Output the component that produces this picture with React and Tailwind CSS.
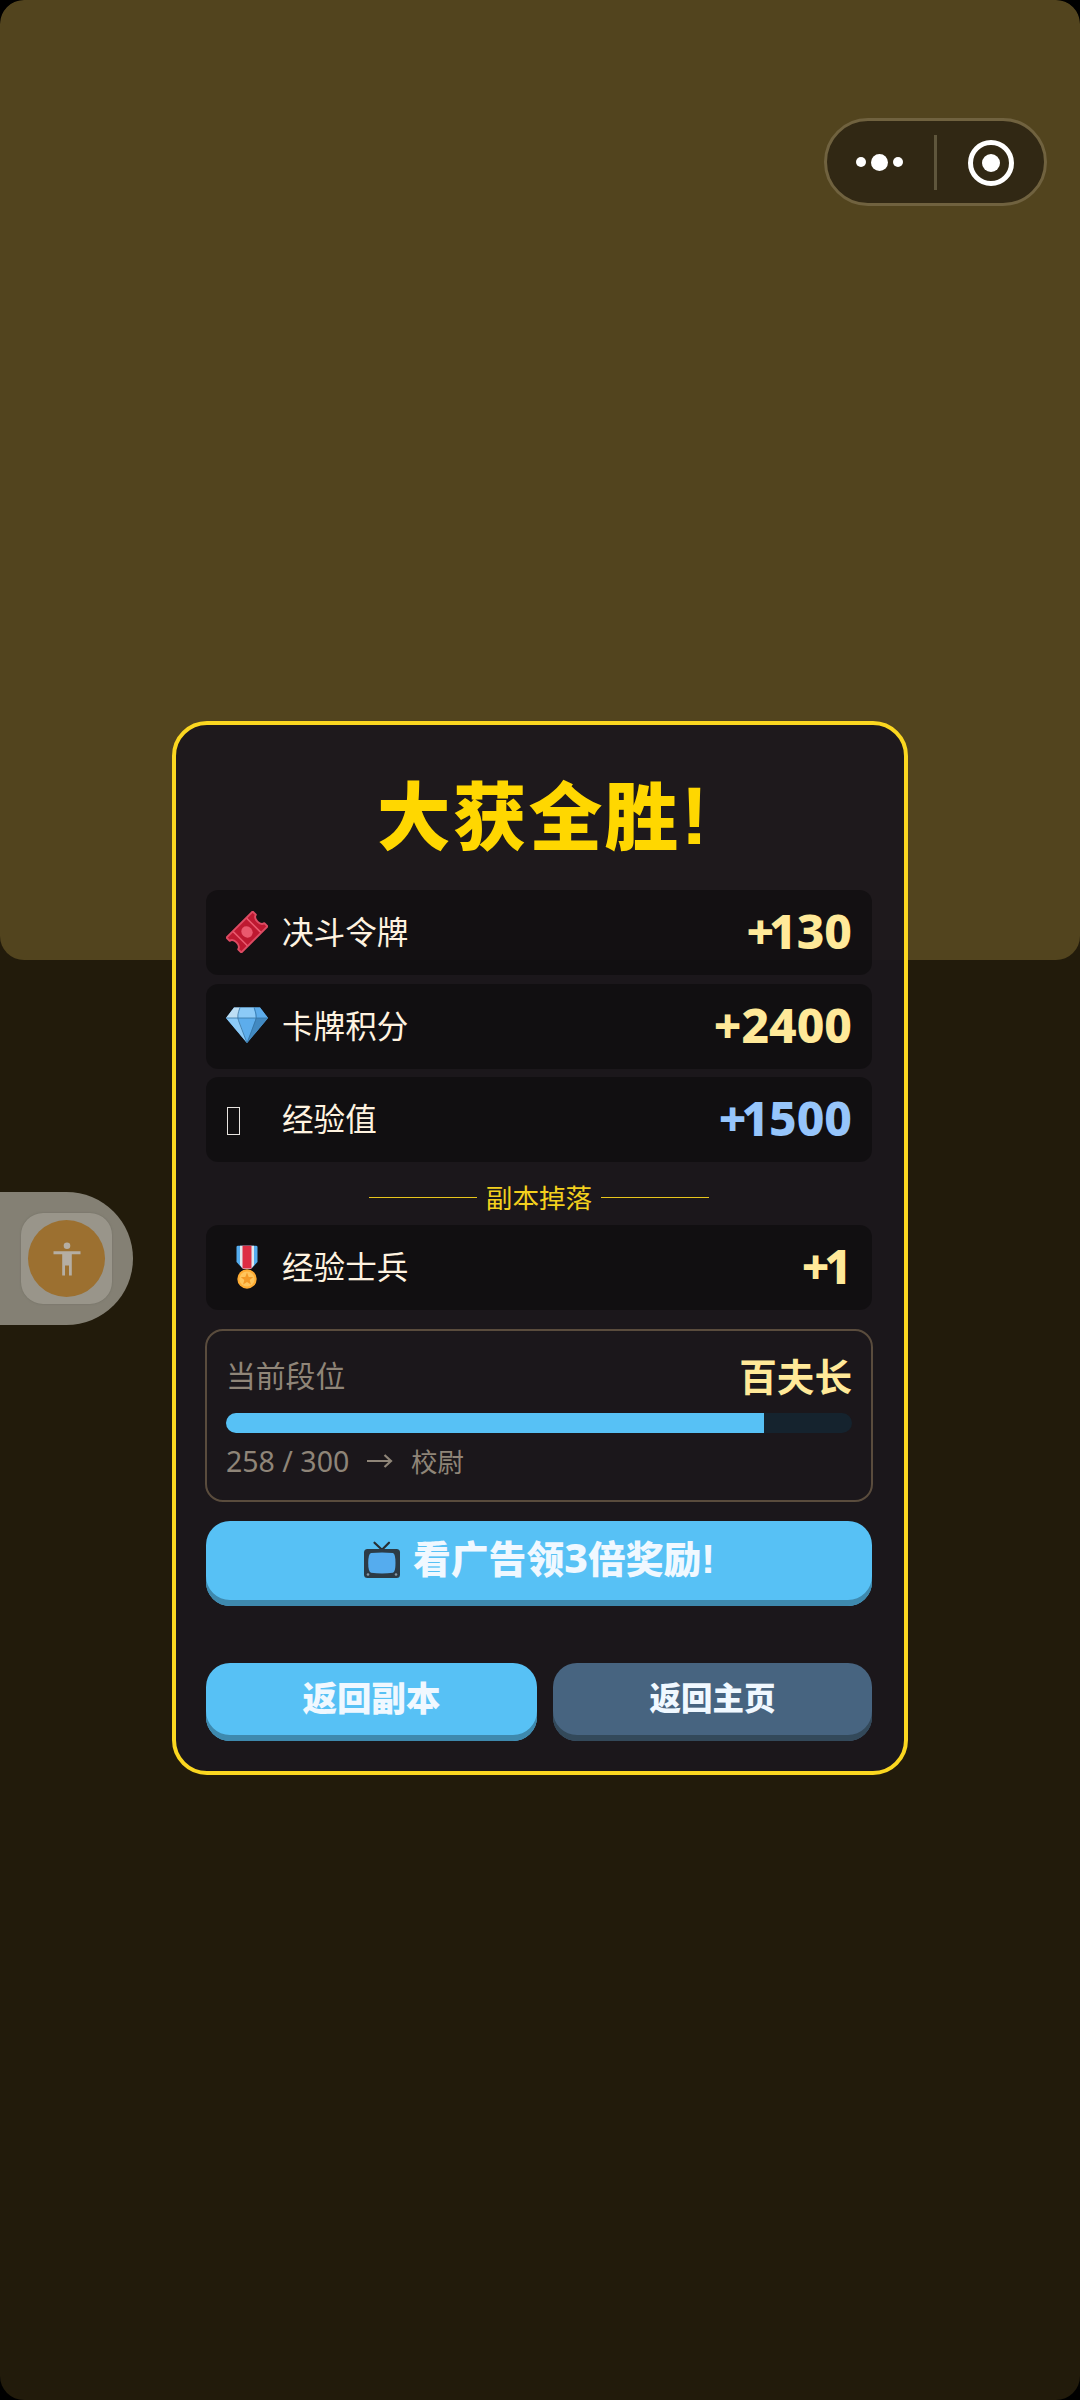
import React from "react";

function TicketIcon() {
  return (
    <svg width="42" height="42" viewBox="0 0 42 42">
      <g transform="translate(21 21) rotate(-45)">
        <path
          d="M-18.5 -10.5 H18.5 V-6 C13.5 -5 13.5 5 18.5 6 V10.5 H-18.5 V6 C-13.5 5 -13.5 -5 -18.5 -6Z"
          fill="#be1931"
          stroke="#dd4b63"
          strokeWidth="1.9"
          strokeLinejoin="round"
        />
        <path d="M-9.5 -10V10M9.5 -10V10" stroke="#ea596e" strokeWidth="1.5" />
        <ellipse rx="5.4" ry="6" fill="#ea596e" />
      </g>
    </svg>
  );
}

function GemIcon() {
  return (
    <svg width="42" height="42" viewBox="0 0 42 42">
      <path d="M8 3.5H34L42 14L21 39L0 14Z" fill="#5dadec" />
      <path d="M8 3.5H14L12 14H0Z" fill="#bddef4" />
      <path d="M14 3.5H28L30 14H12Z" fill="#8ccaf7" />
      <path d="M28 3.5H34L42 14H30Z" fill="#5dadec" />
      <path d="M0 14H12L21 39Z" fill="#8ccaf7" />
      <path d="M30 14H42L21 39Z" fill="#4289c1" />
      <path
        d="M0 14H42M14 3.5Q10.5 12 12.5 16.5L21 39L29.5 16.5Q31.5 12 28 3.5"
        fill="none"
        stroke="#3574a3"
        strokeWidth="0.8"
      />
    </svg>
  );
}

function MedalIcon() {
  return (
    <svg width="42" height="44" viewBox="0 0 42 44">
      <path d="M10.5 2Q10.5 0.7 12 0.7H30Q31.5 0.7 31.5 2V17L26 23H16L10.5 17Z" fill="#55acee" />
      <path d="M14 0.7H28V20L25 24H17L14 20Z" fill="#e1e8ed" />
      <path d="M16.5 0.7H25.5V23.5H16.5Z" fill="#dd2e44" />
      <circle cx="21" cy="34" r="9.7" fill="#ffac33" />
      <circle cx="21" cy="34" r="7.6" fill="#ffc55c" />
      <path
        d="M21 27.6L22.7 31.9L27.2 32.1L23.7 35L24.9 39.4L21 36.9L17.1 39.4L18.3 35L14.8 32.1L19.3 31.9Z"
        fill="#f49a27"
      />
    </svg>
  );
}

function TvIcon() {
  return (
    <svg width="38" height="38" viewBox="0 0 38 38">
      <path d="M11.5 1.7L19 8.8L26 1.7" fill="none" stroke="#292f33" strokeWidth="2.2" strokeLinecap="round" strokeLinejoin="round" />
      <rect x="1" y="8" width="36" height="29" rx="3.5" fill="#2c3b46" />
      <path d="M8 12Q19 10.8 30 12Q32.5 13 32.5 22Q32.5 30.5 30 31.8Q19 33.2 8 31.8Q5.2 30.5 5.2 22Q5.2 13 8 12Z" fill="#55acee" />
      <circle cx="5" cy="33.5" r="1.3" fill="#8899a6" />
      <circle cx="33" cy="33.5" r="1.3" fill="#8899a6" />
    </svg>
  );
}

function EmptyGlyph() {
  return <span className="ml-px mt-[5px] block h-[28px] w-[13px] border border-[#e8e4e0]" />;
}

function RewardRow({ icon, label, amount, tone = "text-[#ffe999]" }) {
  const plusSpacing = amount.startsWith("1") ? "tracking-[-5px]" : "tracking-normal";
  return (
    <div className="flex h-[85px] w-full items-center rounded-[12px] bg-black/35 px-5">
      <div className="flex w-14 items-center pb-[2px]">{icon}</div>
      <span className="pb-[5px] text-[31.6px] leading-10 text-[#fff3e0]">{label}</span>
      <span className={`ml-auto pb-[3px] font-['Noto_Sans',sans-serif] text-[47.8px] leading-none font-extrabold ${tone}`}>
        <span className={plusSpacing}>+</span>
        {amount}
      </span>
    </div>
  );
}

function Capsule() {
  return (
    <div className="absolute top-[118px] left-[824px] flex h-[88px] w-[223px] items-center rounded-full border-[3px] border-[#70623f] bg-[#312814]">
      <div className="flex w-[107px] items-center justify-center gap-[5px] pr-[2px]">
        <i className="size-[10px] rounded-full bg-white" />
        <i className="size-[17px] rounded-full bg-white" />
        <i className="size-[10px] rounded-full bg-white" />
      </div>
      <div className="h-[55px] w-[3px] bg-[#5f563c]" />
      <div className="mt-px flex w-[107px] items-center justify-center pl-px">
        <div className="flex size-[46px] items-center justify-center rounded-full border-[5px] border-white">
          <i className="size-[18px] rounded-full bg-white" />
        </div>
      </div>
    </div>
  );
}

function AccessibilityTab() {
  return (
    <div className="absolute top-[1192px] left-0 flex h-[133px] w-[133px] items-center rounded-r-full bg-[#848074] pl-[21px]">
      <div className="flex size-[91px] items-center justify-center rounded-[22px] bg-[#99958a] shadow-[0_0_2px_#6f6c62]">
        <div className="flex size-[77px] items-center justify-center rounded-full bg-[#9c7030]">
          <svg width="28" height="34" viewBox="0 0 28 34" fill="#b5aea3">
            <circle cx="14" cy="3.7" r="3.3" />
            <path d="M0.5 9.2H27.5V12.3H18.8V33.5H16V23.5H12V33.5H9.2V12.3H0.5Z" />
          </svg>
        </div>
      </div>
    </div>
  );
}

export default function App() {
  return (
    <div className="h-[2400px] w-[1080px] bg-black font-['Noto_Sans_CJK_SC',sans-serif]">
      <main className="relative flex h-full flex-col items-center overflow-hidden rounded-[24px] bg-[#221b0b]">
        <header className="h-[960px] w-full shrink-0 rounded-[24px] bg-[#52441e]" />

        <section className="relative -mt-[239px] flex h-[1054px] w-[736px] shrink-0 flex-col items-center rounded-[35px] border-4 border-[#fbd720] bg-[#1b171c]/95 pr-8 pl-[30px] pt-[44px]">
          <h1 className="flex h-[100px] items-baseline pt-[2px] pl-[7px] text-[73.5px] leading-[83px] font-black tracking-[2.4px] text-[#ffd700]">
            <span>大获全胜</span>
            <span className="font-['Liberation_Sans',sans-serif] text-[82px] leading-none tracking-normal">!</span>
          </h1>

          <div className="mt-[21px] flex w-full flex-col gap-[8.5px]">
            <RewardRow icon={<TicketIcon />} label="决斗令牌" amount="130" />
            <RewardRow icon={<GemIcon />} label="卡牌积分" amount="2400" />
            <RewardRow icon={<EmptyGlyph />} label="经验值" amount="1500" tone="text-[#96c5fb]" />
          </div>

          <div className="flex h-[63px] items-center justify-center gap-[9px] pt-[7px]">
            <span className="h-px w-[108px] bg-[#e8c51c]" />
            <span className="text-[26.6px] leading-none text-[#f3d01e]">副本掉落</span>
            <span className="h-px w-[108px] bg-[#e8c51c]" />
          </div>

          <RewardRow icon={<MedalIcon />} label="经验士兵" amount="1" />

          <div className="mt-[19px] h-[173px] w-[668px] shrink-0 rounded-[18px] border-2 border-[#5a4c3d] px-[19px] pt-[22px]">
            <div className="flex h-[45px] items-center justify-between pb-[2px]">
              <span className="text-[29.8px] leading-none text-[#8f8578]">当前段位</span>
              <span className="text-[37.6px] leading-none font-bold text-[#ffe999]">百夫长</span>
            </div>
            <div className="mt-[15px] h-[20px] w-[626px] overflow-hidden rounded-full bg-[#15232e]">
              <div className="h-full w-[86%] bg-[#57c1f5]" />
            </div>
            <div className="mt-[11px] flex items-center text-[26.4px] leading-[34px] text-[#8f8578]">
              <span className="w-[141px] font-['Noto_Sans',sans-serif] text-[28.5px]">258 / 300</span>
              <svg width="26" height="14" viewBox="0 0 26 14" fill="none" stroke="#8f8578" strokeWidth="2.2">
                <path d="M0 7H24M17.5 1L24 7L17.5 13" />
              </svg>
              <span className="ml-[18px]">校尉</span>
            </div>
          </div>

          <button className="mt-[19px] flex h-[85px] w-full shrink-0 items-center justify-center gap-[12px] rounded-[24px] bg-[#57c1f5] pb-[7px] shadow-[inset_0_-6px_0_#3e89ae]">
            <TvIcon />
            <span className="flex items-baseline pb-[3px] text-[37.8px] leading-none font-black text-[#f0f8ff]">
              看广告领
              <span className="font-['Noto_Sans',sans-serif] text-[41px] leading-none font-extrabold">3</span>
              倍奖励
              <span className="font-['Liberation_Sans',sans-serif] text-[41px] leading-none">!</span>
            </span>
          </button>

          <div className="mt-[57px] flex w-full gap-4">
            <button className="h-[78px] w-[331px] rounded-[24px] bg-[#57c1f5] pb-[12px] text-[34.5px] leading-none font-black text-[#f0f8ff] shadow-[inset_0_-6px_0_#3e89ae]">
              返回副本
            </button>
            <button className="h-[78px] flex-1 rounded-[24px] bg-[#476480] pb-[11px] text-[31.5px] leading-none font-black text-[#f0f8ff] shadow-[inset_0_-6px_0_#33495a]">
              返回主页
            </button>
          </div>
        </section>

        <Capsule />
        <AccessibilityTab />
      </main>
    </div>
  );
}
